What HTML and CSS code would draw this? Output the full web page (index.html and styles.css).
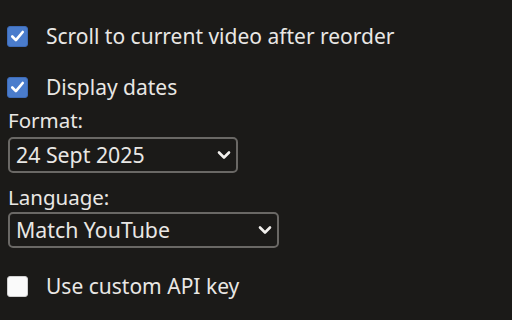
FILE: index.html
```html
<!DOCTYPE html>
<html>
<head>
<meta charset="utf-8">
<link rel="stylesheet" href="styles.css">
</head>
<body>
<div class="panel">
  <label class="check-row row-first">
    <span class="box checked"><svg viewBox="0 0 20 20" width="20" height="20"><path d="M4.5 10.5 L8.3 14.3 L15.5 5.8" fill="none" stroke="#fff" stroke-width="2.8" stroke-linecap="round" stroke-linejoin="round"/></svg></span>
    <span class="check-text">Scroll to current video after reorder</span>
  </label>
  <label class="check-row row-second">
    <span class="box checked"><svg viewBox="0 0 20 20" width="20" height="20"><path d="M4.5 10.5 L8.3 14.3 L15.5 5.8" fill="none" stroke="#fff" stroke-width="2.8" stroke-linecap="round" stroke-linejoin="round"/></svg></span>
    <span class="check-text">Display dates</span>
  </label>
  <div class="field-label label-format">Format:</div>
  <div class="select select-format">
    <span class="select-text">24 Sept 2025</span>
    <svg class="chev" viewBox="0 0 14 10" width="14" height="10"><path d="M2 2.5 L7 7.5 L12 2.5" fill="none" stroke="#f2f0ed" stroke-width="2.6" stroke-linecap="round" stroke-linejoin="round"/></svg>
  </div>
  <div class="field-label label-lang">Language:</div>
  <div class="select select-lang">
    <span class="select-text">Match YouTube</span>
    <svg class="chev" viewBox="0 0 14 10" width="14" height="10"><path d="M2 2.5 L7 7.5 L12 2.5" fill="none" stroke="#f2f0ed" stroke-width="2.6" stroke-linecap="round" stroke-linejoin="round"/></svg>
  </div>
  <label class="check-row row-third">
    <span class="box"></span>
    <span class="check-text">Use custom API key</span>
  </label>
</div>
</body>
</html>
```

FILE: styles.css
```css
html, body {
  margin: 0;
  padding: 0;
  background: #1b1a18;
  width: 512px;
  height: 320px;
  overflow: hidden;
}
body {
  font-family: "Noto Sans", "Open Sans", sans-serif;
  color: #e9e7e4;
}
.panel {
  padding: 0 8px;
  display: flex;
  flex-direction: column;
  align-items: flex-start;
}
.check-row {
  display: flex;
  align-items: center;
  height: 28px;
  margin-left: -1px;
}
.row-first { margin-top: 22px; }
.row-second { margin-top: 23px; }
.row-third { margin-top: 24px; }
.box {
  width: 21px;
  height: 21px;
  box-sizing: border-box;
  border-radius: 3px;
  background: #fafafa;
  border: 1px solid #d0d0d0;
  display: flex;
  align-items: center;
  justify-content: center;
  flex: none;
}
.box.checked {
  background: #4a7ccc;
  border: 1px solid #3d6bb8;
}
.box svg { display: block; }
.check-text {
  margin-left: 18px;
  font-size: 21px;
  line-height: 28px;
}
.field-label {
  font-size: 20.5px;
  line-height: 24px;
}
.label-format { margin-top: 7px; }
.label-lang { margin-top: 12px; }
.select {
  margin-top: 5px;
  height: 36px;
  box-sizing: border-box;
  border: 2px solid #6a6865;
  border-radius: 5px;
  display: flex;
  align-items: center;
  justify-content: space-between;
  padding: 0 5px 0 6px;
}
.select-format { width: 230px; }
.select-lang { width: 271px; margin-top: 3px; }
.select-text {
  font-size: 21.3px;
  line-height: 28px;
}
.chev { display: block; }
```
